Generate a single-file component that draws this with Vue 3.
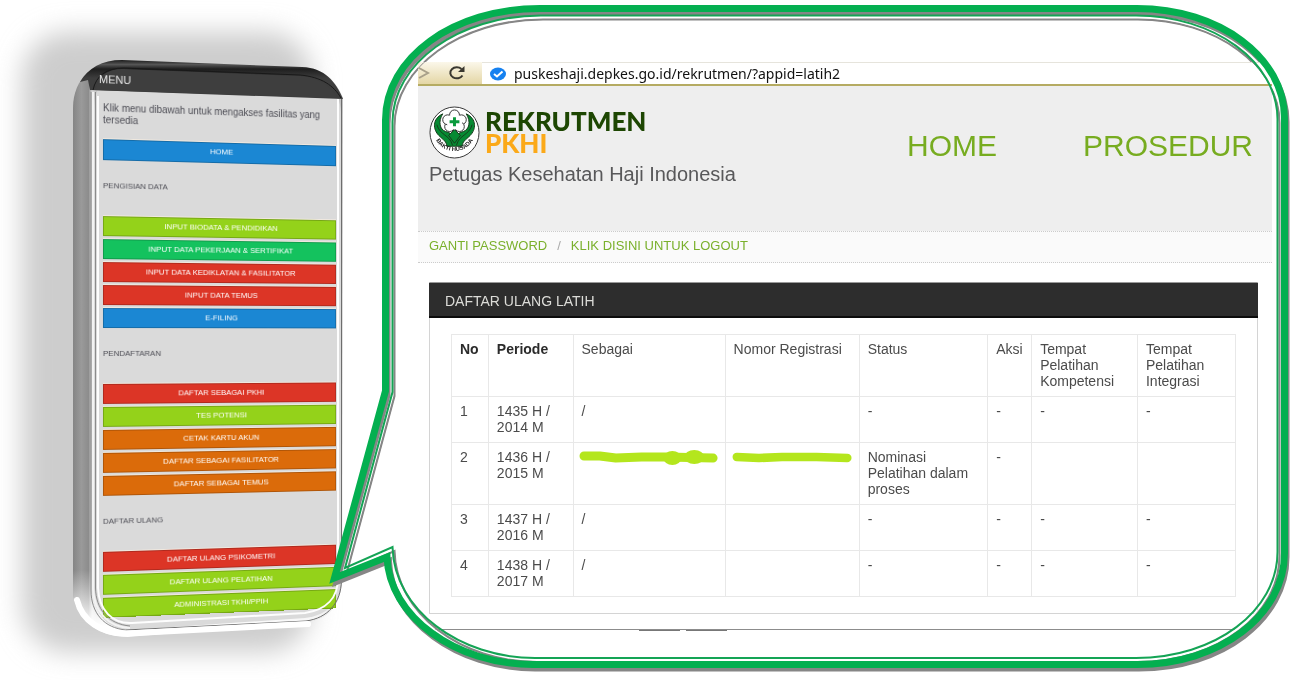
<script setup>
import { ref } from 'vue'

const address = ref('puskeshaji.depkes.go.id/rekrutmen/?appid=latih2')

const groups = [
  {
    title: 'PENGISIAN DATA',
    items: [
      { label: 'INPUT BIODATA & PENDIDIKAN', tone: 'lime' },
      { label: 'INPUT DATA PEKERJAAN & SERTIFIKAT', tone: 'green' },
      { label: 'INPUT DATA KEDIKLATAN & FASILITATOR', tone: 'red' },
      { label: 'INPUT DATA TEMUS', tone: 'red' },
      { label: 'E-FILING', tone: 'blue' },
    ],
  },
  {
    title: 'PENDAFTARAN',
    items: [
      { label: 'DAFTAR SEBAGAI PKHI', tone: 'red' },
      { label: 'TES POTENSI', tone: 'lime' },
      { label: 'CETAK KARTU AKUN', tone: 'orange' },
      { label: 'DAFTAR SEBAGAI FASILITATOR', tone: 'orange' },
      { label: 'DAFTAR SEBAGAI TEMUS', tone: 'orange' },
    ],
  },
  {
    title: 'DAFTAR ULANG',
    items: [
      { label: 'DAFTAR ULANG PSIKOMETRI', tone: 'red' },
      { label: 'DAFTAR ULANG PELATIHAN', tone: 'lime' },
      { label: 'ADMINISTRASI TKHI/PPIH', tone: 'lime' },
    ],
  },
]

const rows = [
  { no: 1, periode: '1435 H / 2014 M', sebagai: '/', status: '-', aksi: '-', kompetensi: '-', integrasi: '-' },
  { no: 2, periode: '1436 H / 2015 M', hidden: true, status: 'Nominasi Pelatihan dalam proses', aksi: '-', kompetensi: '', integrasi: '' },
  { no: 3, periode: '1437 H / 2016 M', sebagai: '/', status: '-', aksi: '-', kompetensi: '-', integrasi: '-' },
  { no: 4, periode: '1438 H / 2017 M', sebagai: '/', status: '-', aksi: '-', kompetensi: '-', integrasi: '-' },
]

const outer = 'M385.5 391 V120 C385.5 58 453 8.5 540 8.5 H1137 C1220 8.5 1284.5 58 1284.5 118 V553 C1284.5 615 1220 664.5 1137 664.5 H533 C455 664.5 389 616 387 557 L334.5 578 Z'
const inner = 'M392.5 392 V122 C392.5 64 458 15.5 541 15.5 H1136 C1214 15.5 1277.5 62 1277.5 119 V552 C1277.5 611 1215 658 1136 658 H535 C460 658 394 610 392.5 547 L345 568 Z'
</script>

<template>
  <main class="scene">
    <section class="phone">
      <svg class="layer" viewBox="0 0 382 680" aria-hidden="true">
        <defs>
          <filter id="soft" x="-20%" y="-20%" width="140%" height="140%">
            <feGaussianBlur stdDeviation="13" />
          </filter>
          <linearGradient id="side" gradientUnits="userSpaceOnUse" x1="73" y1="0" x2="97" y2="0">
            <stop offset="0" stop-color="#858585" />
            <stop offset="0.35" stop-color="#9a9a9a" />
            <stop offset="0.65" stop-color="#8c8c8c" />
            <stop offset="0.8" stop-color="#d8d8d8" />
            <stop offset="1" stop-color="#c4c4c4" />
          </linearGradient>
          <linearGradient id="fade" gradientUnits="userSpaceOnUse" x1="0" y1="570" x2="0" y2="626">
            <stop offset="0" stop-color="#fff" stop-opacity="0" />
            <stop offset="1" stop-color="#fff" />
          </linearGradient>
          <linearGradient id="cap" gradientUnits="userSpaceOnUse" x1="0" y1="60" x2="0" y2="78">
            <stop offset="0" stop-color="#1c1c1c" />
            <stop offset="0.25" stop-color="#555" />
            <stop offset="0.5" stop-color="#1e1e1e" />
            <stop offset="1" stop-color="#3d3d3d" />
          </linearGradient>
        </defs>
        <rect x="22" y="32" width="290" height="620" rx="46" fill="#cdcdcd" filter="url(#soft)" />
        <path d="M73 108 C73 78 95 60 122 60 L302 67 C325 68 336 82 343 98 L342 580 C341 605 328 620 305 622 L128 637 C96 637 73 617 73 590 Z" fill="url(#side)" />
        <path d="M73 560 V590 C73 617 96 637 128 637 L305 622 C328 620 341 605 342 580 V560 Z" fill="url(#fade)" />
        <path d="M94 110 C94 86 106 72 126 70 L300 76 C326 77 340 92 341 112 V580 C340 602 328 615 305 618 L130 630 C108 630 94 614 94 592 Z" fill="#dadada" />
        <path d="M80 82 C88 68 102 60 122 60 L302 67 C325 68 336 82 343 99 L90 90 L88 80 Z" fill="url(#cap)" />
        <path d="M95 90 C98 76 108 68 124 69 L300 76 C320 77 332 88 338 98 Z" fill="#3e3e3e" />
        <path d="M93 90 C96 76 106 68 124 68 L300 75 C322 77 334 86 341 98" fill="none" stroke="#191919" stroke-width="1" />
      </svg>

      <nav class="menu" aria-label="Menu">
        <h2>MENU</h2>
        <div class="menu-body">
          <p>Klik menu dibawah untuk mengakses fasilitas yang tersedia</p>
          <a href="#" class="item home blue">HOME</a>
          <template v-for="group in groups" :key="group.title">
            <h3>{{ group.title }}</h3>
            <ul>
              <li v-for="item in group.items" :key="item.label">
                <a href="#" class="item" :class="item.tone">{{ item.label }}</a>
              </li>
            </ul>
          </template>
        </div>
      </nav>

      <svg class="layer" viewBox="0 0 382 680" aria-hidden="true">
        <path d="M91 92 V590 C91 613 104 628 126 630" fill="none" stroke="#8a8a8a" stroke-width="1" />
        <path d="M93 92 V588 C94 612 108 627 130 628" fill="none" stroke="#f3f3f3" stroke-width="2" />
        <path d="M95.500 92 V588 C96 609 108 624 130 626" fill="none" stroke="#8b8b8b" stroke-width="1" />
        <path d="M98 96 V588 C99 610 112 624 132 623 L305 613 C326 610 338 598 338 578 V99" fill="none" stroke="#fdfdfd" stroke-width="2" />
        <path d="M126 630 L306 621 C328 618 341 603 341.500 580 V99" fill="none" stroke="#6d6d6d" stroke-width="1" />
        <path d="M77 600 C82 621 102 634 126 633.500 L308 624" fill="none" stroke="#fff" stroke-width="6" stroke-linecap="round" />
      </svg>
    </section>

    <section class="callout">
      <svg class="layer" viewBox="382 0 908 680" preserveAspectRatio="none" aria-hidden="true">
        <path :d="outer" fill="#fff" />
        <g fill="none" stroke="#868686" transform="translate(2 4)">
          <path :d="outer" stroke-width="6" />
          <path :d="inner" stroke-width="2" />
        </g>
      </svg>

      <div class="browser">
        <div class="toolbar">
          <button type="button" aria-label="Maju" class="forward">
            <svg viewBox="0 0 12 16" width="12" height="16"><path d="M1 3 L10 8 L1 13" fill="none" stroke="#a8a08a" stroke-width="2" /></svg>
          </button>
          <button type="button" aria-label="Muat ulang" class="reload">
            <svg viewBox="0 0 18 16" width="18" height="16">
              <path d="M14.500 10.500 A6.500 5.500 0 1 1 13.500 4" fill="none" stroke="#3a3830" stroke-width="2" />
              <path d="M16.500 1 V7 H10 Z" fill="#3a3830" />
            </svg>
          </button>
          <label class="address">
            <svg viewBox="0 0 16 14" width="16" height="14" aria-hidden="true">
              <ellipse cx="8" cy="7" rx="8" ry="6.500" fill="#1681f0" />
              <path d="M4 7 L7 9.500 L12.500 4.500" fill="none" stroke="#fff" stroke-width="2" />
            </svg>
            <input v-model="address" type="text" aria-label="Alamat" />
          </label>
        </div>

        <header class="site-header">
          <div class="brand">
            <div class="brand-row">
              <svg viewBox="0 0 52 54" width="51" height="53" role="img" aria-label="Bakti Husada">
                <defs><path id="arc" d="M6 32 A21 20 0 0 0 46 32" /></defs>
                <ellipse cx="26" cy="27" rx="25" ry="26" fill="#fff" stroke="#333" stroke-width="1" />
                <path d="M14 8 C3 13 4 24 10 30 C15 35 18 36 18 41 H34 C34 36 37 35 42 30 C48 24 49 13 38 8 C43 16 41 24 35 26 C30 27 28 30 26 32 C24 30 22 27 17 26 C11 24 9 16 14 8 Z" fill="#078a33" stroke="#173b1d" stroke-width="1" />
                <path d="M8 19 C11 30 21 29 24 40 M44 19 C41 30 31 29 28 40" fill="none" stroke="#173b1d" stroke-width="1" />
                <path d="M26 24 L32 30 L26 38 L20 30 Z" fill="#078a33" stroke="#173b1d" stroke-width="1" />
                <g fill="#fff" stroke="#333" stroke-width="1">
                  <circle cx="26" cy="9" r="5" /><circle cx="33" cy="14" r="5" /><circle cx="31" cy="21" r="5" />
                  <circle cx="21" cy="21" r="5" /><circle cx="19" cy="14" r="5" />
                </g>
                <circle cx="26" cy="16" r="8" fill="#fff" />
                <path d="M24.500 11.500 H27.500 V14.500 H31 V17.500 H27.500 V20.500 H24.500 V17.500 H21 V14.500 H24.500 Z" fill="#0a9a3c" />
                <text class="seal"><textPath href="#arc" startOffset="50%" text-anchor="middle">BAKTI HUSADA</textPath></text>
              </svg>
              <h1><span class="dark">REKRUTMEN</span><span class="gold">PKHI</span></h1>
            </div>
            <p>Petugas Kesehatan Haji Indonesia</p>
          </div>
          <nav class="main-nav" aria-label="Utama">
            <a href="#">HOME</a>
            <a href="#">PROSEDUR</a>
          </nav>
        </header>

        <nav class="crumbs" aria-label="Akun">
          <a href="#">GANTI PASSWORD</a><span>/</span><a href="#">KLIK DISINI UNTUK LOGOUT</a>
        </nav>

        <section class="panel">
          <h2>DAFTAR ULANG LATIH</h2>
          <div class="panel-body">
            <table>
              <colgroup>
                <col class="c-no" /><col class="c-per" /><col class="c-seb" /><col class="c-reg" />
                <col class="c-sta" /><col class="c-aks" /><col class="c-kom" /><col class="c-int" />
              </colgroup>
              <thead>
                <tr>
                  <th class="strong">No</th>
                  <th class="strong">Periode</th>
                  <th>Sebagai</th>
                  <th class="nowrap">Nomor Registrasi</th>
                  <th>Status</th>
                  <th class="nowrap">Aksi</th>
                  <th>Tempat Pelatihan Kompetensi</th>
                  <th>Tempat Pelatihan Integrasi</th>
                </tr>
              </thead>
              <tbody>
                <tr v-for="row in rows" :key="row.no">
                  <td>{{ row.no }}</td>
                  <td>{{ row.periode }}</td>
                  <td>
                    <svg v-if="row.hidden" class="mark" viewBox="0 0 136 16" aria-hidden="true">
                      <path d="M2 7 L18 7 L34 9 L60 8 L84 8 L132 9" />
                      <ellipse cx="91" cy="9" rx="9" ry="7" /><ellipse cx="113" cy="8" rx="10" ry="7" />
                    </svg>
                    <template v-else>{{ row.sebagai }}</template>
                  </td>
                  <td>
                    <svg v-if="row.hidden" class="mark" viewBox="0 0 122 16" aria-hidden="true">
                      <path d="M3 8 L26 9 L50 8 L86 8 L118 9" />
                    </svg>
                  </td>
                  <td>{{ row.status }}</td>
                  <td>{{ row.aksi }}</td>
                  <td>{{ row.kompetensi }}</td>
                  <td>{{ row.integrasi }}</td>
                </tr>
              </tbody>
            </table>
          </div>
        </section>
        <div class="edge"><i></i><i></i></div>
      </div>

      <svg class="layer" viewBox="382 0 908 680" preserveAspectRatio="none" aria-hidden="true">
        <path :d="inner" fill="none" stroke="#868686" stroke-width="1" transform="translate(2 4)" />
        <path :d="outer" fill="none" stroke="#04af50" stroke-width="7" />
        <path :d="inner" fill="none" stroke="#14a455" stroke-width="2" />
      </svg>
    </section>
  </main>
</template>

<style>
body { margin: 0; background: #fff; }
</style>

<style scoped>
* { box-sizing: border-box; }
h1, h2, h3, p, ul { margin: 0; padding: 0; font-weight: 400; }
ul { list-style: none; }
a { text-decoration: none; }

.scene {
  display: grid;
  grid-template-columns: 382px 1fr;
  min-height: 100vh;
  overflow: hidden;
  font-family: "Liberation Sans", Arial, sans-serif;
}
.phone, .callout { position: relative; }
.layer {
  position: absolute;
  inset: 0;
  width: 100%;
  height: 100%;
  overflow: visible;
  pointer-events: none;
}

/* phone */
.menu {
  position: relative;
  width: 247px;
  margin-left: 99px;
  padding-top: 72px;
  transform-origin: 0 340px;
  transform: perspective(720px) rotateY(6deg);
}
.menu h2 { font-size: 11px; line-height: 14px; color: #e8e8e8; }
.menu-body { padding: 16px 0 0 4px; }
.menu p { font-size: 10px; line-height: 12px; color: #4c4c54; white-space: normal; }
.menu h3 { padding: 20px 0 24px; font-size: 8px; line-height: 12px; color: #4c4c54; }
.menu ul { display: grid; gap: 3px; }
.item {
  display: block;
  height: 20px;
  border: 1px solid rgba(0, 0, 0, 0.2);
  box-shadow: 0 -1px 0 #f0e8de;
  color: #fff;
  font-size: 8px;
  line-height: 18px;
  text-align: center;
}
.home { height: 21px; margin-top: 13px; }
.blue { background: #1b87d3; }
.lime { background: #94d21a; }
.green { background: #14c25e; }
.red { background: #dc3526; }
.orange { background: #db6b0a; }

/* callout */
.callout { margin-right: 8px; padding: 8px 6px 15px 4px; }
.browser {
  position: relative;
  padding: 54px 12px 27px 32px;
  border-radius: 150px / 110px;
  overflow: hidden;
}
.toolbar {
  display: flex;
  align-items: stretch;
  height: 24px;
  background: linear-gradient(#fbf7ea, #e4d6a5);
  border-bottom: 2px solid #b5ab62;
}
.toolbar button { padding: 0; border: 0; background: none; line-height: 0; }
.reload { margin: 0 16px 0 18px; }
.address {
  display: flex;
  flex: 1;
  align-items: center;
  gap: 8px;
  padding-left: 8px;
  border-top: 1px solid #e6e4dc;
  background: #fff;
}
.address input {
  flex: 1;
  min-width: 0;
  padding: 0;
  border: 0;
  outline: 0;
  background: none;
  color: #111;
  font: 14px/18px "Noto Sans", sans-serif;
}
.site-header {
  display: flex;
  justify-content: space-between;
  height: 145px;
  padding: 20px 19px 0 11px;
  background: #eee;
}
.brand-row { display: flex; gap: 5px; }
.seal { font-size: 6px; font-weight: 700; fill: #222; }
.brand h1 {
  padding-top: 4px;
  font: 900 26px/22px Lato, sans-serif;
}
.brand h1 span { display: block; }
.dark { color: #1d4602; }
.gold { color: #fba919; }
.brand p { margin-top: 4px; font-size: 20px; line-height: 22px; color: #58585a; }
.main-nav { display: flex; gap: 86px; padding-top: 22px; font-size: 30px; line-height: 36px; }
.main-nav a { color: #77ac20; }
.crumbs {
  display: flex;
  gap: 10px;
  height: 32px;
  padding-left: 11px;
  border-top: 1px dotted #ccc;
  border-bottom: 1px dotted #ccc;
  background: #fafafa;
  font-size: 13px;
  line-height: 28px;
}
.crumbs a { color: #7ab02c; }
.crumbs span { color: #aaa; }
.panel { margin: 19px 14px 0 11px; border: 1px solid #d4d4d4; border-top-color: #999; }
.panel h2 {
  height: 35px;
  margin: 0 -1px;
  padding-left: 16px;
  border-bottom: 2px solid #0c0c0c;
  background: #2d2d2d;
  color: #dcdcd8;
  font-size: 14px;
  line-height: 36px;
}
.panel-body { padding: 16px 21px 16px; }
table {
  width: 100%;
  border-collapse: collapse;
  table-layout: fixed;
  color: #4b4b4b;
  font-size: 14px;
  line-height: 16px;
}
th, td {
  padding: 6px 8px 7px;
  border: 1px solid #e8e8e8;
  font-weight: 400;
  text-align: left;
  vertical-align: top;
}
.strong { color: #2b2b2b; font-weight: 700; }
.nowrap { white-space: nowrap; }
.c-no { width: 4.7%; }
.c-per { width: 10.8%; }
.c-seb { width: 19.4%; }
.c-reg { width: 17.1%; }
.c-sta { width: 16.4%; }
.c-aks { width: 5.6%; }
.c-kom { width: 13.5%; }
.c-int { width: 12.5%; }
.mark { display: block; width: 100%; height: 16px; overflow: visible; }
.mark path { fill: none; stroke: #b4e61d; stroke-width: 9; stroke-linecap: round; stroke-linejoin: round; }
.mark ellipse { fill: #b4e61d; }
.edge { display: flex; gap: 6px; margin-top: 15px; padding-left: 221px; border-top: 1px solid #8c8c8c; }
.edge i { width: 41px; height: 1px; background: #777; }
</style>
